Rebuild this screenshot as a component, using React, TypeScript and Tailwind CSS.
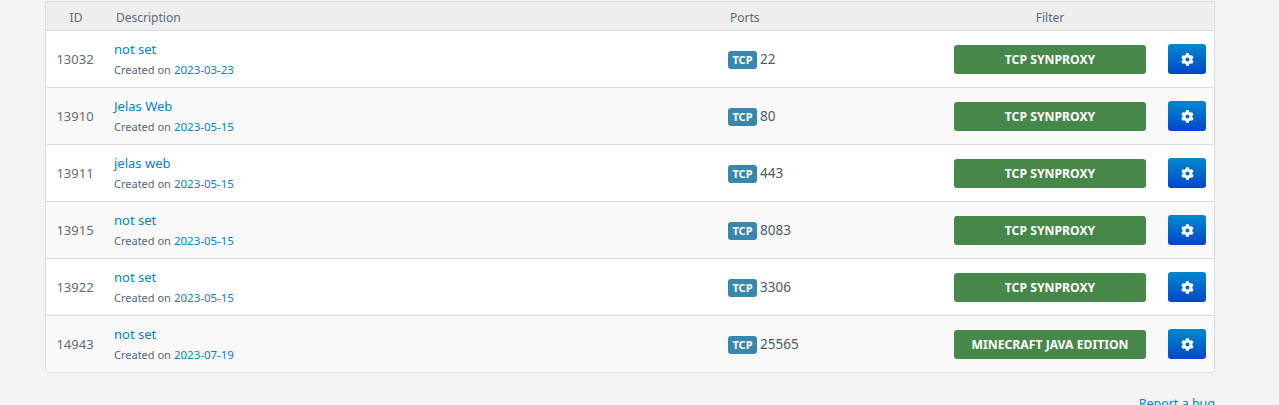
import React from "react";

const rules = [
  { id: 13032, name: "not set", created: "2023-03-23", port: 22, filter: "TCP SYNPROXY" },
  { id: 13910, name: "Jelas Web", created: "2023-05-15", port: 80, filter: "TCP SYNPROXY" },
  { id: 13911, name: "jelas web", created: "2023-05-15", port: 443, filter: "TCP SYNPROXY" },
  { id: 13915, name: "not set", created: "2023-05-15", port: 8083, filter: "TCP SYNPROXY" },
  { id: 13922, name: "not set", created: "2023-05-15", port: 3306, filter: "TCP SYNPROXY" },
  { id: 14943, name: "not set", created: "2023-07-19", port: 25565, filter: "MINECRAFT JAVA EDITION" },
];

const GearIcon: React.FC = () => (
  <svg viewBox="0 0 512 512" className="w-[13px] h-[13px] fill-white">
    <path d="M487 316l-42-24a191 191 0 0 0 0-72l42-24c5-3 7-9 5-14a248 248 0 0 0-55-95c-4-4-10-5-15-2l-42 24a188 188 0 0 0-62-36V25c0-6-4-11-9-12a250 250 0 0 0-110 0c-5 1-9 6-9 12v48a194 194 0 0 0-62 36L86 85c-5-3-11-2-15 2a247 247 0 0 0-55 95c-2 5 0 11 5 14l42 24a191 191 0 0 0 0 72l-42 24c-5 3-7 9-5 14a248 248 0 0 0 55 95c4 4 10 5 15 2l42-24a188 188 0 0 0 62 36v48c0 6 4 11 9 12a250 250 0 0 0 110 0c5-1 9-6 9-12v-48a194 194 0 0 0 62-36l42 24c5 3 11 2 15-2a247 247 0 0 0 55-95c2-5 0-11-5-14zM254 336a80 80 0 1 1 0-160 80 80 0 0 1 0 160z" />
  </svg>
);

export default function App() {
  return (
    <div className="h-[405px] overflow-hidden bg-[#f4f4f4] px-[45px] pt-px font-['Noto_Sans',sans-serif] text-[#555]">
      <div className="w-[1170px] overflow-hidden rounded-b border border-[#ddd]">
        {/* Header */}
        <div className="flex h-[28px] items-center bg-[#eee] pt-[3px] text-[12px] text-[#5a6b7b]">
          <div className="w-[60px] text-center">ID</div>
          <div className="w-[622px] pl-[10px]">Description</div>
          <div className="w-[226px] pl-[2px]">Ports</div>
          <div className="w-[192px] text-center">Filter</div>
        </div>

        {rules.map((rule, i) => (
          <div
            key={rule.id}
            className={`flex h-[57px] items-center border-t border-[#ddd] ${
              i % 2 === 1 ? "bg-[#f9f9f9]" : "bg-white"
            }`}
          >
            <div className="w-[60px] pr-[2px] pt-[2px] text-center text-[13px] text-[#5f6b75]">{rule.id}</div>
            <div className="flex w-[622px] flex-col gap-[4px] pl-[8px]">
              <a className="text-[13px] leading-[18px] text-[#0781c8]">{rule.name}</a>
              <div className="text-[11.5px] leading-[16px] text-[#0781c8]">
                <span className="text-[11px] text-[#4a6a85]">Created on</span> {rule.created}
              </div>
            </div>
            <div className="flex w-[226px] items-center gap-[3px] text-[13.5px] text-[#4d5a66]">
              <span className="mt-[2px] flex h-[18px] w-[29px] items-center justify-center rounded-[3px] bg-[#3a87ad] text-[11px] font-bold text-white">
                TCP
              </span>
              <span>{rule.port}</span>
            </div>
            <button className="flex h-[29px] w-[192px] items-center justify-center rounded-[3px] bg-[#46884a] pt-[2px] text-[12.2px] font-bold text-white">
              {rule.filter}
            </button>
            <button className="ml-[22px] flex h-[30px] w-[38px] items-center justify-center rounded-[3px] bg-gradient-to-b from-[#0088cc] to-[#0044cc]">
              <GearIcon />
            </button>
          </div>
        ))}
      </div>

      <div className="mt-[22px] w-[1170px] text-right text-[12.5px] text-[#0781c8]">Report a bug</div>
    </div>
  );
}
